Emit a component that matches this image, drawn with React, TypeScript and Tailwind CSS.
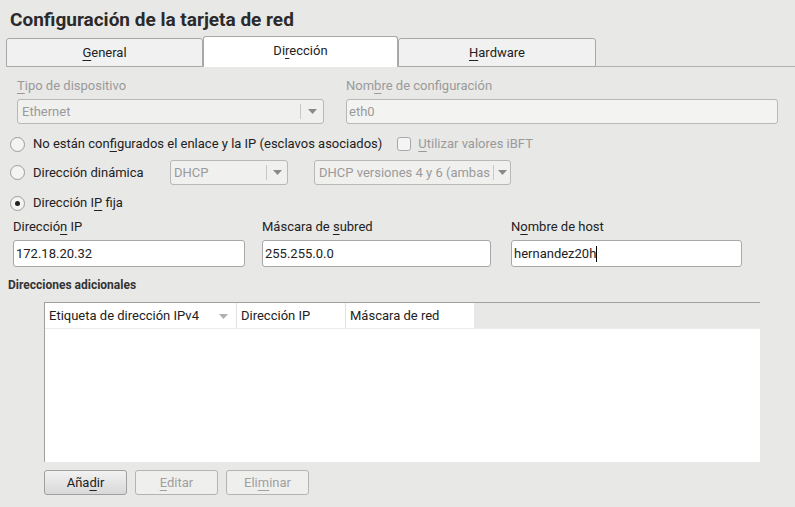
import React from "react";

const U = ({ children }: { children: React.ReactNode }) => (
  <span className="underline decoration-1 underline-offset-[3px]">{children}</span>
);

const Arrow = ({ color = "#8a8a8a" }: { color?: string }) => (
  <svg width="9" height="5" viewBox="0 0 9 5">
    <path d="M0 0 L9 0 L4.5 5 Z" fill={color} />
  </svg>
);

const Radio = ({ checked = false }: { checked?: boolean }) => (
  <div className="w-[15px] h-[15px] rounded-full border border-[#9c9c9c] bg-[#f4f4f4] flex items-center justify-center">
    {checked && <div className="w-[5px] h-[5px] rounded-full bg-[#222]" />}
  </div>
);

export default function App() {
  return (
    <div
      className="w-[795px] h-[507px] bg-[#e8e8e7] text-[13px] text-[#222] overflow-hidden"
      style={{ fontFamily: "Roboto, 'Noto Sans', sans-serif" }}
    >
      {/* title */}
      <div className="h-[36px] pt-[8px] pl-[10px] text-[19px] font-bold leading-[24px] text-[#2a2a2a]">
        Configuración de la tarjeta de red
      </div>

      {/* tabs */}
      <div className="flex items-end h-[31px] pl-[6px]">
        <div className="w-[197px] h-[29px] bg-[#f1f1f1] border border-[#a8a8a8] rounded-t-[3px] flex items-center justify-center">
          <span><U>G</U>eneral</span>
        </div>
        <div className="w-[195px] h-[31px] bg-white border border-b-0 border-[#a8a8a8] rounded-t-[3px] flex items-center justify-center pb-[2px]">
          <span>Di<U>r</U>ección</span>
        </div>
        <div className="w-[198px] h-[29px] bg-[#f1f1f1] border border-[#a8a8a8] rounded-t-[3px] flex items-center justify-center">
          <span><U>H</U>ardware</span>
        </div>
        <div className="flex-1 h-[2px] border-b border-[#b0b0b0]" />
      </div>

      {/* device type row */}
      <div className="flex mt-[11px] text-[#9a9a9a]">
        <div className="ml-[17px] w-[307px] flex flex-col">
          <div className="h-[16px] leading-[16px]"><U>T</U>ipo de dispositivo</div>
          <div className="mt-[5px] h-[25px] border border-[#b8b8b8] rounded-[3px] bg-[#f0f0ef] flex items-center pl-[4px]">
            <span className="flex-1">Ethernet</span>
            <div className="w-[1px] h-[15px] bg-[#c8c8c8]" />
            <div className="w-[22px] flex justify-center"><Arrow /></div>
          </div>
        </div>
        <div className="ml-[22px] w-[432px] flex flex-col">
          <div className="h-[16px] leading-[16px]">Nom<U>b</U>re de configuración</div>
          <div className="mt-[5px] h-[25px] border border-[#b8b8b8] rounded-[3px] bg-[#f3f3f2] flex items-center pl-[2px]">
            eth0
          </div>
        </div>
      </div>

      {/* radio rows */}
      <div className="flex items-center h-[20px] mt-[10px] pl-[10px]">
        <Radio />
        <span className="ml-[8px]">No están con<U>f</U>igurados el enlace y la IP (esclavos asociados)</span>
        <div className="ml-[15px] w-[14px] h-[14px] border border-[#a8a8a8] rounded-[3px] bg-[#f4f4f4]" />
        <span className="ml-[7px] text-[#9a9a9a]"><U>U</U>tilizar valores iBFT</span>
      </div>

      <div className="flex items-center h-[25px] mt-[6px] pl-[10px]">
        <Radio />
        <span className="ml-[8px] w-[137px]">Dirección dinámica</span>
        <div className="w-[118px] h-[25px] border border-[#b8b8b8] rounded-[3px] bg-[#f0f0ef] flex items-center pl-[3px] text-[#9a9a9a]">
          <span className="flex-1">DHCP</span>
          <div className="w-[1px] h-[15px] bg-[#c8c8c8]" />
          <div className="w-[20px] flex justify-center"><Arrow /></div>
        </div>
        <div className="ml-[26px] w-[197px] h-[25px] border border-[#b8b8b8] rounded-[3px] bg-[#f0f0ef] flex items-center pl-[4px] text-[#9a9a9a] overflow-hidden">
          <span className="flex-1 whitespace-nowrap overflow-hidden">DHCP versiones 4 y 6 (ambas</span>
          <div className="w-[1px] h-[15px] bg-[#c8c8c8]" />
          <div className="w-[16px] flex justify-center"><Arrow /></div>
        </div>
      </div>

      <div className="flex items-center h-[20px] mt-[8px] pl-[10px]">
        <Radio checked />
        <span className="ml-[8px]">Dirección I<U>P</U> fija</span>
      </div>

      {/* IP fields */}
      <div className="flex mt-[6px] pl-[13px]">
        <div className="w-[232px] flex flex-col">
          <div className="h-[16px] leading-[16px]">Direcció<U>n</U> IP</div>
          <div className="mt-[5px] h-[27px] bg-white border border-[#a8a8a8] rounded-[3px] flex items-center pl-[2px]">172.18.20.32</div>
        </div>
        <div className="ml-[17px] w-[229px] flex flex-col">
          <div className="h-[16px] leading-[16px]">Máscara de <U>s</U>ubred</div>
          <div className="mt-[5px] h-[27px] bg-white border border-[#a8a8a8] rounded-[3px] flex items-center pl-[2px]">255.255.0.0</div>
        </div>
        <div className="ml-[20px] w-[231px] flex flex-col">
          <div className="h-[16px] leading-[16px]">N<U>o</U>mbre de host</div>
          <div className="mt-[5px] h-[27px] bg-white border border-[#a8a8a8] rounded-[3px] flex items-center pl-[2px]">
            hernandez20h<span className="w-[1px] h-[16px] bg-black" />
          </div>
        </div>
      </div>

      {/* additional */}
      <div className="mt-[10px] pl-[8px] h-[16px] leading-[16px] text-[12px] font-bold text-[#333]">Direcciones adicionales</div>

      <div className="ml-[44px] mt-[9px] w-[716px] h-[160px] border-t border-l border-[#a0a0a0] bg-white flex flex-col">
        <div className="flex h-[26px] bg-[#e8e8e7] border-b border-[#ececec]">
          <div className="w-[192px] bg-white border-r border-[#e2e2e2] flex items-center pl-[4px] pr-[8px] pt-[1px]">
            <span className="flex-1">Etiqueta de dirección IPv4</span>
            <Arrow color="#b0b0b0" />
          </div>
          <div className="w-[109px] bg-white border-r border-[#e2e2e2] flex items-center pl-[4px] pt-[1px]">Dirección IP</div>
          <div className="w-[128px] bg-white flex items-center pl-[4px] pt-[1px]">Máscara de red</div>
        </div>
        <div className="flex-1 bg-white" />
      </div>

      {/* buttons */}
      <div className="flex gap-[8px] mt-[8px] ml-[44px]">
        <div className="w-[83px] h-[25px] rounded-[3px] border border-[#a0a0a0] bg-gradient-to-b from-[#f2f2f2] to-[#d8d8d8] flex items-center justify-center">
          <span>Aña<U>d</U>ir</span>
        </div>
        <div className="w-[83px] h-[25px] rounded-[3px] border border-[#b4b4b4] bg-[#efefee] flex items-center justify-center text-[#a0a0a0]">
          <span><U>E</U>ditar</span>
        </div>
        <div className="w-[83px] h-[25px] rounded-[3px] border border-[#b4b4b4] bg-[#efefee] flex items-center justify-center text-[#a0a0a0]">
          <span>Eli<U>m</U>inar</span>
        </div>
      </div>
    </div>
  );
}
